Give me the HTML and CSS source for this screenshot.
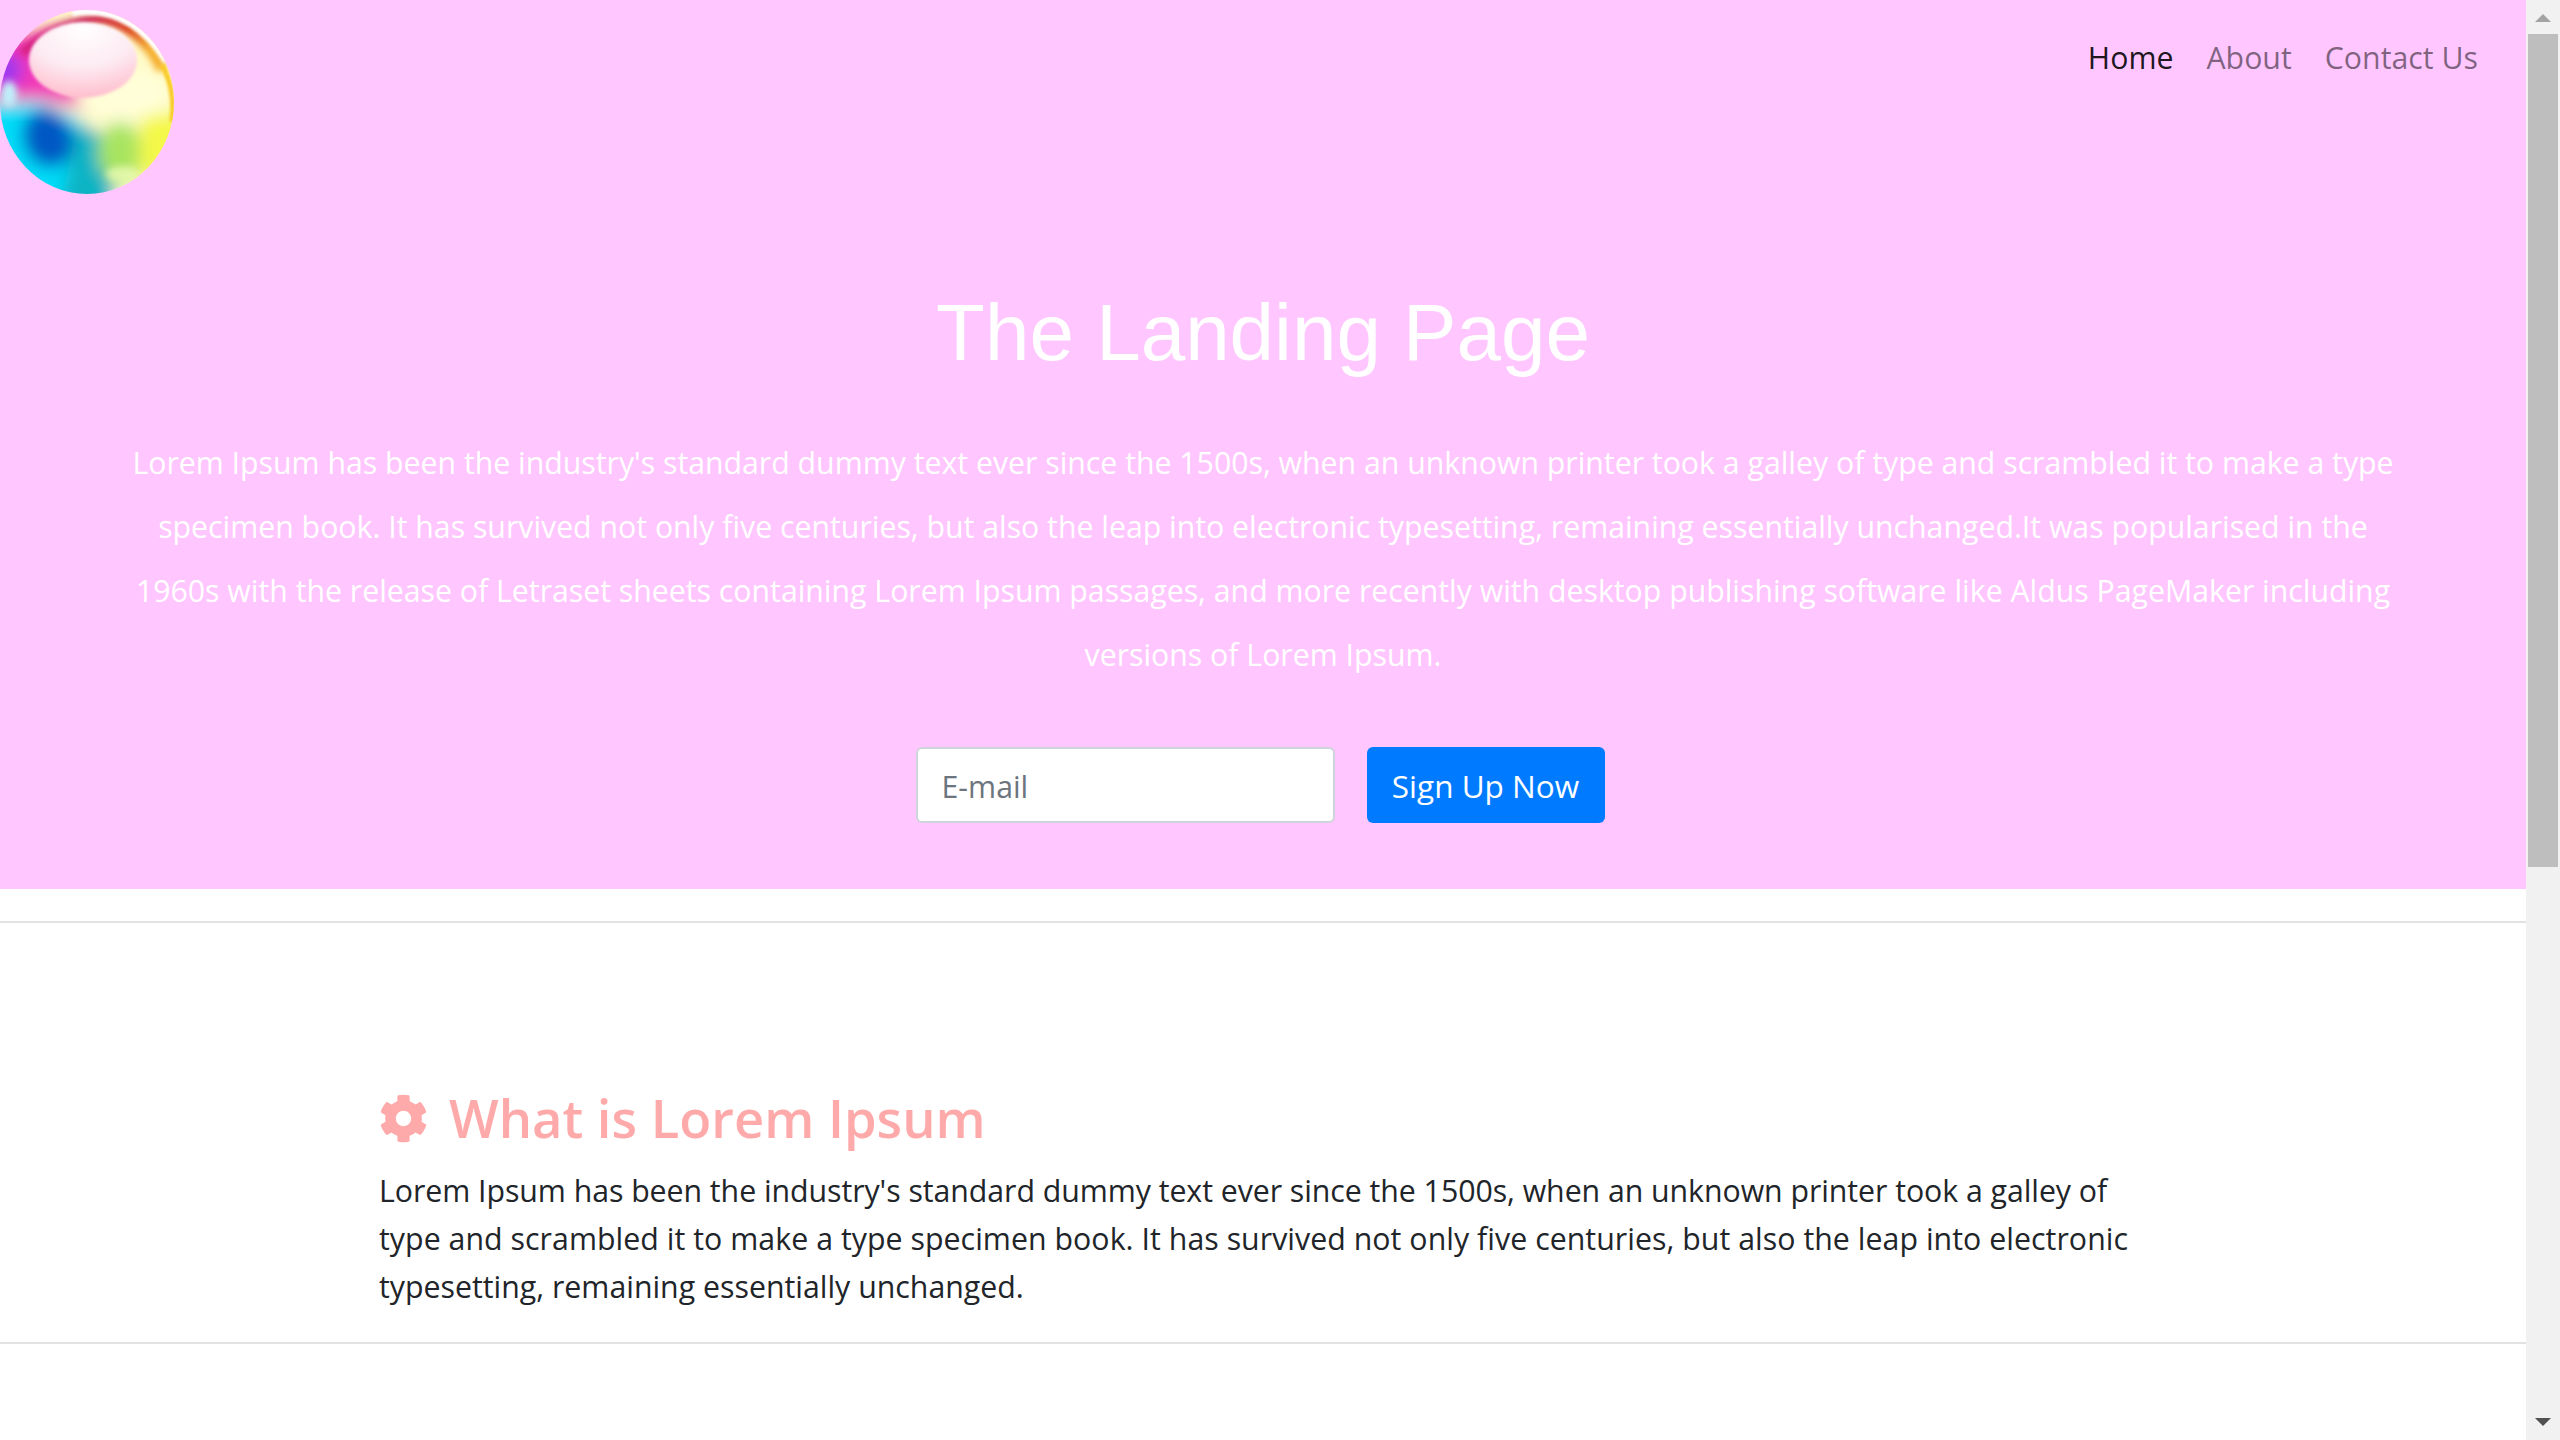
FILE: index.html
```html
<!DOCTYPE html>
<html lang="en">
<head>
<meta charset="utf-8">
<title>The Landing Page</title>
<link rel="stylesheet" href="styles.css">
</head>
<body>
<div class="window">
  <main class="page">
    <section class="hero">
      <header class="topbar">
        <svg class="logo" viewBox="0 0 174 184" aria-label="logo">
          <defs>
            <clipPath id="ballClip"><ellipse cx="87" cy="92" rx="87" ry="92"/></clipPath>
            <filter id="soft" x="-20%" y="-20%" width="140%" height="140%"><feGaussianBlur stdDeviation="8"/></filter>
            <filter id="b3" x="-60%" y="-60%" width="220%" height="220%"><feGaussianBlur stdDeviation="3.5"/></filter>
            <filter id="b1" x="-60%" y="-60%" width="220%" height="220%"><feGaussianBlur stdDeviation="1.4"/></filter>
            <radialGradient id="gloss" cx="0.5" cy="0.1" r="1">
              <stop offset="0" stop-color="#fff"/>
              <stop offset="0.5" stop-color="#fdeaf2"/>
              <stop offset="1" stop-color="#ffb3c4"/>
            </radialGradient>
            <linearGradient id="rim" x1="0" y1="0" x2="1" y2="0.3">
              <stop offset="0" stop-color="#e01f9c"/>
              <stop offset="0.4" stop-color="#c9205c"/>
              <stop offset="0.75" stop-color="#d8300f"/>
              <stop offset="1" stop-color="#f4a820"/>
            </linearGradient>
          </defs>
          <g clip-path="url(#ballClip)">
            <g filter="url(#soft)">
              <rect x="-30" y="-30" width="240" height="250" fill="#fffbc8"/>
              <path d="M-30 30 L60 15 L88 100 L40 90 L-30 90 Z" fill="#f238b8"/>
              <ellipse cx="6" cy="60" rx="16" ry="18" fill="#9a38f0"/>
              <path d="M-30 94 L40 92 L78 108 L72 220 L-30 220 Z" fill="#00dcf8"/>
              <ellipse cx="48" cy="128" rx="25" ry="30" fill="#0058c4" transform="rotate(-20 48 128)"/>
              <path d="M78 110 L108 130 L118 220 L56 220 Z" fill="#10b4c4"/>
              <ellipse cx="120" cy="142" rx="22" ry="30" fill="#a8e460"/>
              <path d="M140 108 L210 95 L210 150 L140 172 Z" fill="#f4f848"/>
              <ellipse cx="122" cy="84" rx="46" ry="26" fill="#fffed8"/>
            </g>
            <ellipse cx="122" cy="164" rx="16" ry="8" fill="#e8fab0" filter="url(#b3)" opacity="0.8"/>
            <ellipse cx="9" cy="84" rx="8" ry="13" fill="#c0effa" filter="url(#b3)"/>
            <path d="M22 44 Q55 12 100 9 Q140 14 162 60" fill="none" stroke="url(#rim)" stroke-width="10" filter="url(#b3)"/>
            <path d="M162 55 Q176 80 172 112" fill="none" stroke="#f8c820" stroke-width="5" filter="url(#b1)"/>
            <path d="M72 1 Q130 -8 168 50" fill="none" stroke="#fff" stroke-width="10" filter="url(#b1)"/>
            <path d="M172 130 Q160 165 122 182" fill="none" stroke="#fafff0" stroke-width="3" filter="url(#b1)"/>
            <ellipse cx="83" cy="50" rx="54" ry="38" fill="url(#gloss)" filter="url(#b1)"/>
          </g>
        </svg>
        <nav class="nav">
          <a class="nav-link active">Home</a>
          <a class="nav-link">About</a>
          <a class="nav-link">Contact Us</a>
        </nav>
      </header>
      <h1 class="title">The Landing Page</h1>
      <p class="lead">Lorem Ipsum has been the industry's standard dummy text ever since the 1500s, when an unknown printer took a galley of type and scrambled it to make a type<br>specimen book. It has survived not only five centuries, but also the leap into electronic typesetting, remaining essentially unchanged.It was popularised in the<br>1960s with the release of Letraset sheets containing Lorem Ipsum passages, and more recently with desktop publishing software like Aldus PageMaker including<br>versions of Lorem Ipsum.</p>
      <form class="signup">
        <input class="email" type="text" placeholder="E-mail">
        <button class="btn" type="button">Sign Up Now</button>
      </form>
    </section>
    <hr class="rule rule-first">
    <section class="feature">
      <h2 class="feature-title">
        <svg class="gear" viewBox="0 0 512 512"><path d="M487.4 315.7l-42.6-24.6c4.3-23.2 4.3-47 0-70.2l42.6-24.6c4.9-2.8 7.1-8.6 5.5-14-11.1-35.6-30-67.8-54.7-94.6-3.8-4.1-10-5.1-14.8-2.3L380.8 110c-17.9-15.4-38.5-27.3-60.8-35.1V25.8c0-5.6-3.9-10.5-9.4-11.7-36.7-8.2-74.3-7.8-109.2 0-5.5 1.2-9.4 6.1-9.4 11.7V75c-22.2 7.9-42.8 19.8-60.8 35.1L88.7 85.5c-4.9-2.8-11-1.9-14.8 2.3-24.7 26.7-43.6 58.9-54.7 94.6-1.7 5.4.6 11.2 5.5 14L67.3 221c-4.3 23.2-4.3 47 0 70.2l-42.6 24.6c-4.9 2.8-7.1 8.6-5.5 14 11.1 35.6 30 67.8 54.7 94.6 3.8 4.1 10 5.1 14.8 2.3l42.6-24.6c17.9 15.4 38.5 27.3 60.8 35.1v49.2c0 5.6 3.9 10.5 9.4 11.7 36.7 8.2 74.3 7.8 109.2 0 5.5-1.2 9.4-6.1 9.4-11.7v-49.2c22.2-7.9 42.8-19.8 60.8-35.1l42.6 24.6c4.9 2.8 11 1.9 14.8-2.3 24.7-26.7 43.6-58.9 54.7-94.6 1.5-5.5-.7-11.3-5.6-14.1zM256 336c-44.1 0-80-35.9-80-80s35.9-80 80-80 80 35.9 80 80-35.9 80-80 80z"/></svg>
        <span>What is Lorem Ipsum</span>
      </h2>
      <p class="feature-text"><span class="line line-tight">Lorem Ipsum has been the industry's standard dummy text ever since the 1500s, when an unknown printer took a galley of</span><span class="line line-wide">type and scrambled it to make a type specimen book. It has survived not only five centuries, but also the leap into electronic</span><span class="line">typesetting, remaining essentially unchanged.</span></p>
    </section>
    <hr class="rule">
  </main>
  <aside class="scrollbar">
    <span class="arrow arrow-up"></span>
    <span class="thumb"></span>
    <span class="track"></span>
    <span class="arrow arrow-down"></span>
  </aside>
</div>
</body>
</html>
```
FILE: styles.css
```css
* { box-sizing: border-box; }
html, body { margin: 0; height: 100%; overflow: hidden; }
body { font-family: "Open Sans", "Noto Sans", sans-serif; color: #212529; background: #fff; font-size: 30.3px; }
.window { display: flex; height: 1440px; width: 2560px; }
.page { flex: 1; min-width: 0; overflow: hidden; }
.hero { height: 889px; background: #ffc6ff; text-align: center; display: flow-root; }
.topbar { display: flex; justify-content: space-between; align-items: flex-start; padding: 10px 48px 0 0; height: 194px; }
.logo { width: 174px; height: 184px; display: block; flex: none; }
.nav { display: flex; gap: 33px; line-height: 48px; margin-top: 24px; }
.nav-link { color: rgba(0,0,0,.5); }
.nav-link.active { color: rgba(0,0,0,.9); }
.title { margin: 91px 0 0; font: 400 80px/96px "Liberation Sans", Arial, sans-serif; color: #fff; }
.lead { margin: 50px 0 0; line-height: 64px; color: #fff; font-size: 30.25px; }
.signup { display: flex; justify-content: center; gap: 32px; margin-top: 60px; padding-right: 6px; }
.email { width: 419px; height: 76px; padding: 2px 24px 0 24px; border: 2px solid #ced4da; border-radius: 6px; font: inherit; background: #fff; }
.email::placeholder { color: #6c757d; opacity: 1; }
.btn { width: 238px; height: 76px; border: 0; border-radius: 6px; background: #007bff; color: #fff; font: inherit; font-size: 31.5px; padding: 0; }
.rule { border: 0; height: 2px; background: #e2e2e2; margin: 0; }
.rule-first { margin-top: 32px; }
.feature { padding: 159px 379px 0; height: 419px; }
.feature-title { display: flex; align-items: center; gap: 21px; margin: 0; font-size: 52.5px; font-weight: 600; line-height: 72px; color: #ffaaaa; height: 72px; }
.gear { width: 49px; height: 49px; fill: currentColor; flex: none; }
.feature-text { margin: 13px 0 0; line-height: 48px; }
.line { display: block; }
.line-tight { letter-spacing: -0.055px; }
.line-wide { letter-spacing: 0.04px; }
.scrollbar { width: 34px; background: #f1f1f1; display: flex; flex-direction: column; align-items: center; }
.arrow { width: 0; height: 0; border-left: 8px solid transparent; border-right: 8px solid transparent; flex: none; }
.arrow-up { border-bottom: 8px solid #a3a3a3; margin: 14px 0 12px; }
.thumb { width: 30px; height: 833px; background: #bebebe; flex: none; }
.track { flex: 1; }
.arrow-down { border-top: 8px solid #505050; margin: 12px 0 14px; }
```
